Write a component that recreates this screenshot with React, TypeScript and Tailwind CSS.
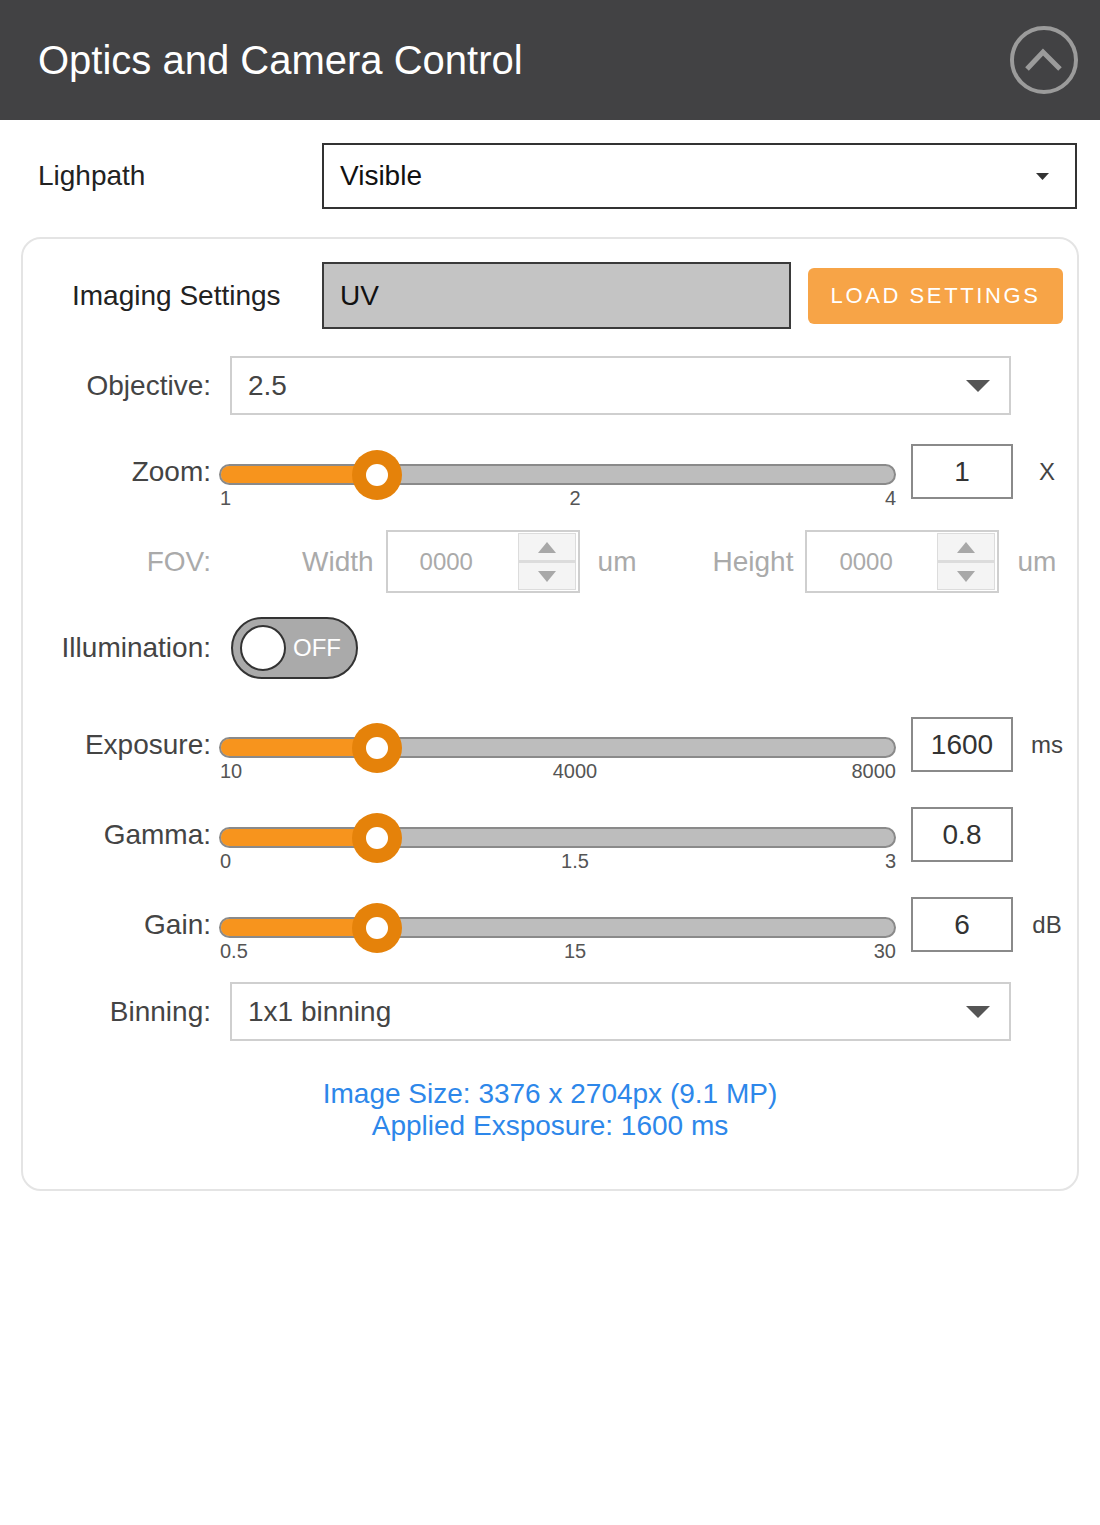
import React from "react";

function DownTri({ w, h, color }: { w: number; h: number; color: string }) {
  return (
    <svg width={w} height={h} viewBox={`0 0 ${w} ${h}`}>
      <polygon points={`0,0 ${w},0 ${w / 2},${h}`} fill={color} />
    </svg>
  );
}

function UpTri({ w, h, color }: { w: number; h: number; color: string }) {
  return (
    <svg width={w} height={h} viewBox={`0 0 ${w} ${h}`}>
      <polygon points={`0,${h} ${w},${h} ${w / 2},0`} fill={color} />
    </svg>
  );
}

function SliderRow({
  label,
  ticks,
  value,
  unit,
  className,
}: {
  label: string;
  ticks: [string, string, string];
  value: string;
  unit: string;
  className: string;
}) {
  return (
    <div className={"flex items-start h-[55px] " + className}>
      <div className="w-[188px] h-[55px] flex items-center justify-end text-[28px] text-[#444]">{label}</div>
      <div className="ml-[8px] w-[677px] pt-[20px]">
        <div className="relative h-[21px] rounded-full border-2 border-[#8a8a8a] bg-[#bdbdbd]">
          <div className="absolute left-0 top-0 bottom-0 w-[156px] rounded-l-full bg-[#f7941d]" />
          <div className="absolute left-[156px] top-1/2 -translate-x-1/2 -translate-y-1/2 w-[50px] h-[50px] rounded-full bg-[#e5820a] flex items-center justify-center">
            <div className="w-[22px] h-[22px] rounded-full bg-white" />
          </div>
        </div>
        <div className="relative h-[20px] mt-[3px] text-[20px] leading-[20px] text-[#555]">
          <span className="absolute left-[1px] top-0">{ticks[0]}</span>
          <span className="absolute left-[356px] top-0 -translate-x-1/2">{ticks[1]}</span>
          <span className="absolute right-0 top-0">{ticks[2]}</span>
        </div>
      </div>
      <div className="ml-[15px] w-[102px] h-[55px] border-2 border-[#8a8a8a] flex items-center justify-center text-[28px] text-[#333]">
        {value}
      </div>
      <div className="ml-[5px] w-[58px] h-[55px] flex items-center justify-center text-[24px] text-[#444]">{unit}</div>
    </div>
  );
}

function SpinInput() {
  return (
    <div className="w-[194px] h-[63px] border-2 border-[#cfcfcf] flex items-stretch">
      <div className="flex-1 flex items-center pl-[32px] text-[24px] text-[#aaa]">0000</div>
      <div className="w-[58px] mr-[2px] my-[1px] border border-[#dcdcdc] bg-[#f4f4f4] flex flex-col">
        <div className="flex-1 flex items-center justify-center">
          <UpTri w={18} h={11} color="#a8a8a8" />
        </div>
        <div className="h-[3px] bg-[#dcdcdc]" />
        <div className="flex-1 flex items-center justify-center">
          <DownTri w={18} h={11} color="#a8a8a8" />
        </div>
      </div>
    </div>
  );
}

function SelectBox({ text }: { text: string }) {
  return (
    <div className="ml-[19px] w-[781px] h-[59px] border-2 border-[#cfcfcf] flex items-center justify-between pl-[16px] pr-[19px] text-[28px] text-[#444]">
      <span>{text}</span>
      <DownTri w={24} h={12} color="#555" />
    </div>
  );
}

export default function App() {
  return (
    <div className="w-[1100px] min-h-[1525px] bg-white font-['Liberation_Sans',Arial,sans-serif]">
      <div className="h-[120px] bg-[#424244] flex items-center justify-between pl-[38px] pr-[20px]">
        <div className="text-[40px] text-white">Optics and Camera Control</div>
        <svg width="72" height="72" viewBox="0 0 72 72">
          <circle cx="36" cy="36" r="32" fill="none" stroke="#9b9b9b" strokeWidth="4" />
          <polyline points="19,45 35,28 52,45" fill="none" stroke="#9b9b9b" strokeWidth="5" />
        </svg>
      </div>

      <div className="flex items-center mt-[23px] pl-[38px]">
        <div className="w-[284px] text-[28px] text-[#222]">Lighpath</div>
        <div className="w-[755px] h-[66px] border-2 border-[#333] flex items-center justify-between pl-[16px] pr-[26px] text-[28px] text-[#111]">
          <span>Visible</span>
          <DownTri w={13} h={7} color="#333" />
        </div>
      </div>

      <div className="mx-[21px] mt-[28px] border-2 border-[#e4e4e4] rounded-[20px] pt-[23px] pb-[47px]">
        <div className="flex items-center h-[67px]">
          <div className="pl-[49px] w-[299px] text-[28px] text-[#222]">Imaging Settings</div>
          <div className="w-[469px] h-[67px] bg-[#c4c4c4] border-2 border-[#3a3a3a] flex items-center pl-[16px] text-[28px] text-[#111]">
            UV
          </div>
          <div className="ml-[17px] w-[255px] h-[56px] rounded-[6px] bg-[#f7a447] flex items-center justify-center text-[22px] tracking-[2.6px] text-white">
            LOAD SETTINGS
          </div>
        </div>

        <div className="flex items-center h-[59px] mt-[27px]">
          <div className="w-[188px] text-right text-[28px] text-[#444]">Objective:</div>
          <SelectBox text="2.5" />
        </div>

        <SliderRow className="mt-[29px]" label="Zoom:" ticks={["1", "2", "4"]} value="1" unit="X" />

        <div className="flex items-center h-[63px] mt-[31px] text-[28px] text-[#aaa]">
          <div className="w-[188px] text-right">FOV:</div>
          <div className="ml-[91px]">Width</div>
          <div className="ml-[12px]">
            <SpinInput />
          </div>
          <div className="ml-[18px]">um</div>
          <div className="ml-[76px]">Height</div>
          <div className="ml-[12px]">
            <SpinInput />
          </div>
          <div className="ml-[18px]">um</div>
        </div>

        <div className="flex items-center h-[62px] mt-[24px]">
          <div className="w-[188px] text-right text-[28px] text-[#444]">Illumination:</div>
          <div className="ml-[20px] w-[127px] h-[62px] rounded-full bg-[#aaa] border-2 border-[#333] flex items-center pl-[7px]">
            <div className="w-[46px] h-[46px] rounded-full bg-white border-2 border-[#333]" />
            <span className="ml-[7px] text-[24px] text-white">OFF</span>
          </div>
        </div>

        <SliderRow className="mt-[38px]" label="Exposure:" ticks={["10", "4000", "8000"]} value="1600" unit="ms" />
        <SliderRow className="mt-[35px]" label="Gamma:" ticks={["0", "1.5", "3"]} value="0.8" unit="" />
        <SliderRow className="mt-[35px]" label="Gain:" ticks={["0.5", "15", "30"]} value="6" unit="dB" />

        <div className="flex items-center h-[59px] mt-[30px]">
          <div className="w-[188px] text-right text-[28px] text-[#444]">Binning:</div>
          <SelectBox text="1x1 binning" />
        </div>

        <div className="mt-[37px] text-center text-[28px] leading-[32px] text-[#2d87ea]">
          <div>Image Size: 3376 x 2704px (9.1 MP)</div>
          <div>Applied Exsposure: 1600 ms</div>
        </div>
      </div>
    </div>
  );
}
